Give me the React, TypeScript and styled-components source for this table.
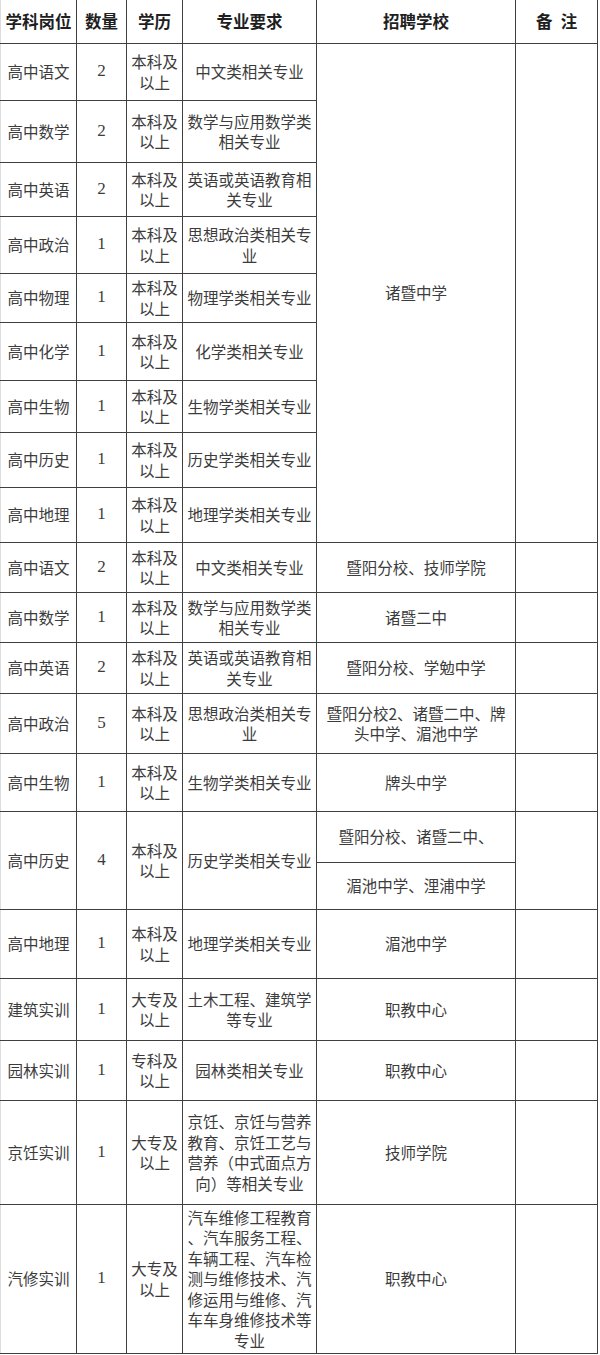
import React from "react";
import styled, { createGlobalStyle } from "styled-components";

const GlobalStyle = createGlobalStyle`
  html, body {
    margin: 0;
    padding: 0;
    background: #ffffff;
  }
  body {
    font-family: "Noto Sans CJK SC", "Noto Sans", sans-serif;
  }
`;

const Table = styled.table`
  border-collapse: collapse;
  table-layout: fixed;
  width: 598px;
  color: #3c3c3c;
  font-size: 15.5px;
  line-height: 20.5px;
`;

const Col = styled.col<{ $w: number }>`
  width: ${(p) => p.$w}px;
`;

const Row = styled.tr<{ $h: number }>`
  height: ${(p) => p.$h}px;
`;

const HeadCell = styled.th<{ $edge?: boolean }>`
  border: 1px solid #3f3f3f;
  border-top: none;
  border-left-color: ${(p) => (p.$edge ? "#dcdcdc" : "#3f3f3f")};
  padding: 0;
  text-align: center;
  vertical-align: middle;
  font-size: 16.5px;
  font-weight: 700;
  color: #1f1f1f;
  white-space: nowrap;
`;

const Cell = styled.td<{ $edge?: boolean; $num?: boolean }>`
  border: 1px solid #3f3f3f;
  border-left-color: ${(p) => (p.$edge ? "#dcdcdc" : "#3f3f3f")};
  padding: 0 2px;
  text-align: center;
  vertical-align: middle;
  white-space: pre-line;
  font-family: ${(p) =>
    p.$num ? '"Liberation Serif", "Times New Roman", serif' : "inherit"};
  font-size: ${(p) => (p.$num ? "17px" : "inherit")};
`;

type Item = {
  subject: string;
  count: string;
  edu: string;
  major: string;
  h: number;
  school?: string;
  schoolSpan?: number;
  split?: { text: string; h: number }[];
};

const BK = "本科及\n以上";
const DZ = "大专及\n以上";

const items: Item[] = [
  { subject: "高中语文", count: "2", edu: BK, major: "中文类相关专业", h: 57, school: "诸暨中学", schoolSpan: 9 },
  { subject: "高中数学", count: "2", edu: BK, major: "数学与应用数学类\n相关专业", h: 62 },
  { subject: "高中英语", count: "2", edu: BK, major: "英语或英语教育相\n关专业", h: 54 },
  { subject: "高中政治", count: "1", edu: BK, major: "思想政治类相关专\n业", h: 57 },
  { subject: "高中物理", count: "1", edu: BK, major: "物理学类相关专业", h: 49 },
  { subject: "高中化学", count: "1", edu: BK, major: "化学类相关专业", h: 58 },
  { subject: "高中生物", count: "1", edu: BK, major: "生物学类相关专业", h: 52 },
  { subject: "高中历史", count: "1", edu: BK, major: "历史学类相关专业", h: 55 },
  { subject: "高中地理", count: "1", edu: BK, major: "地理学类相关专业", h: 55 },
  { subject: "高中语文", count: "2", edu: BK, major: "中文类相关专业", h: 50, school: "暨阳分校、技师学院" },
  { subject: "高中数学", count: "1", edu: BK, major: "数学与应用数学类\n相关专业", h: 50, school: "诸暨二中" },
  { subject: "高中英语", count: "2", edu: BK, major: "英语或英语教育相\n关专业", h: 51, school: "暨阳分校、学勉中学" },
  { subject: "高中政治", count: "5", edu: BK, major: "思想政治类相关专\n业", h: 60, school: "暨阳分校2、诸暨二中、牌\n头中学、湄池中学" },
  { subject: "高中生物", count: "1", edu: BK, major: "生物学类相关专业", h: 58, school: "牌头中学" },
  {
    subject: "高中历史",
    count: "4",
    edu: BK,
    major: "历史学类相关专业",
    h: 98,
    split: [
      { text: "暨阳分校、诸暨二中、", h: 51 },
      { text: "湄池中学、浬浦中学", h: 47 },
    ],
  },
  { subject: "高中地理", count: "1", edu: BK, major: "地理学类相关专业", h: 69, school: "湄池中学" },
  { subject: "建筑实训", count: "1", edu: DZ, major: "土木工程、建筑学\n等专业", h: 62, school: "职教中心" },
  { subject: "园林实训", count: "1", edu: "专科及\n以上", major: "园林类相关专业", h: 60, school: "职教中心" },
  {
    subject: "京饪实训",
    count: "1",
    edu: DZ,
    major: "京饪、京饪与营养\n教育、京饪工艺与\n营养（中式面点方\n向）等相关专业",
    h: 104,
    school: "技师学院",
  },
  {
    subject: "汽修实训",
    count: "1",
    edu: DZ,
    major: "汽车维修工程教育\n、汽车服务工程、\n车辆工程、汽车检\n测与维修技术、汽\n修运用与维修、汽\n车车身维修技术等\n专业",
    h: 149,
    school: "职教中心",
  },
];

function Rows() {
  const out: React.ReactNode[] = [];
  items.forEach((it, i) => {
    if (it.split) {
      const [a, b] = it.split;
      out.push(
        <Row key={`${i}a`} $h={a.h}>
          <Cell $edge rowSpan={2}>{it.subject}</Cell>
          <Cell $num rowSpan={2}>{it.count}</Cell>
          <Cell rowSpan={2}>{it.edu}</Cell>
          <Cell rowSpan={2}>{it.major}</Cell>
          <Cell>{a.text}</Cell>
          <Cell rowSpan={2} />
        </Row>
      );
      out.push(
        <Row key={`${i}b`} $h={b.h}>
          <Cell>{b.text}</Cell>
        </Row>
      );
      return;
    }
    out.push(
      <Row key={i} $h={it.h}>
        <Cell $edge>{it.subject}</Cell>
        <Cell $num>{it.count}</Cell>
        <Cell>{it.edu}</Cell>
        <Cell>{it.major}</Cell>
        {it.school !== undefined && (
          <Cell rowSpan={it.schoolSpan ?? 1}>{it.school}</Cell>
        )}
        {it.school !== undefined && <Cell rowSpan={it.schoolSpan ?? 1} />}
      </Row>
    );
  });
  return <>{out}</>;
}

export default function App() {
  return (
    <>
      <GlobalStyle />
      <Table>
        <colgroup>
          <Col $w={76} />
          <Col $w={50} />
          <Col $w={56} />
          <Col $w={134} />
          <Col $w={199} />
          <Col $w={82} />
        </colgroup>
        <thead>
          <Row $h={43}>
            <HeadCell $edge>学科岗位</HeadCell>
            <HeadCell>数量</HeadCell>
            <HeadCell>学历</HeadCell>
            <HeadCell>专业要求</HeadCell>
            <HeadCell>招聘学校</HeadCell>
            <HeadCell>备{"\u2002"}注</HeadCell>
          </Row>
        </thead>
        <tbody>
          <Rows />
        </tbody>
      </Table>
    </>
  );
}
